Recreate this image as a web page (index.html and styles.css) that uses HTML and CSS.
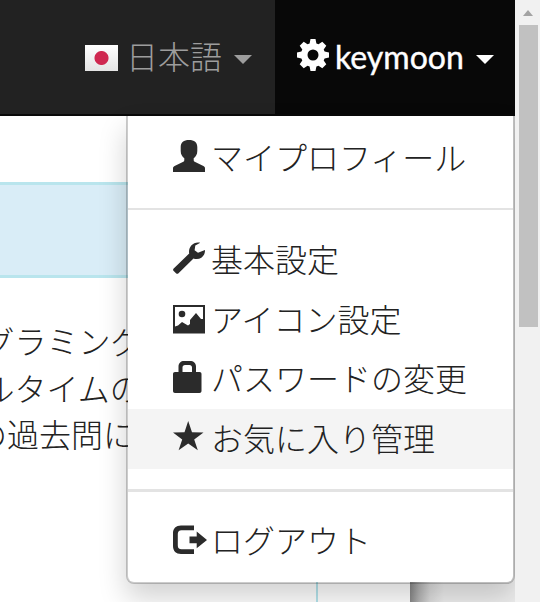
FILE: index.html
```html
<!DOCTYPE html>
<html lang="ja">
<head>
<meta charset="utf-8">
<title>AtCoder</title>
<link rel="stylesheet" href="styles.css">
</head>
<body>
<div class="view">
  <nav class="navbar">
    <div class="lang"><span class="flag"></span><span class="label">日本語</span><span class="caret"></span></div>
    <div class="account">
      <svg class="gear" viewBox="0 0 32 32"><path fill-rule="evenodd" d="M13.500 0h5l.9 4.400 2.100.9L25.300 2.700 29.300 6.700 26.700 10.500l.9 2.100L32 13.500v5l-4.400.9-.9 2.100 2.600 3.800-4 4-3.800-2.600-2.100.9-.9 4.400h-5l-.9-4.400-2.100-.9-3.800 2.600-4-4 2.600-3.800-.9-2.100L0 18.500v-5l4.400-.9.9-2.100L2.700 6.700l4-4 3.800 2.600 2.100-.9zM16 10.500a5.500 5.500 0 1 0 0 11 5.500 5.500 0 0 0 0-11z"/></svg>
      <span class="name">keymoon</span><span class="caret"></span>
    </div>
  </nav>
  <main class="page">
    <div class="content">
      <div class="alert"></div>
      <div class="copy">
        <p class="line">グラミング</p>
        <p class="line">ルタイムの</p>
        <p class="line wide">の過去問に</p>
      </div>
    </div>
    <div class="edge"></div>
  </main>
  <ul class="menu">
    <li class="item"><svg viewBox="0 0 32 32"><path d="M16 0c5.300 0 8.300 2.600 8.300 7v4c0 3.500-1.600 5.700-3.600 7.300v1.900c0 .7.400 1.200 1 1.500l8.700 4.400c1 .5 1.600 1.300 1.600 2.300V32H0v-3.600c0-1 .6-1.800 1.600-2.300l8.700-4.400c.6-.3 1-.8 1-1.500v-1.900C9.300 16.700 7.700 14.500 7.700 11V7c0-4.400 3-7 8.300-7z"/></svg><span>マイプロフィール</span></li>
    <li class="divider"></li>
    <li class="item"><svg viewBox="0 0 32 32"><path d="M27.300.8 22.300 3.500 21.600 8.200l3.400 2.500L32 8c.2 5.200-3.400 9-8.300 9-1.300 0-2.300-.2-3.200-.6L5.500 31.200c-.8.8-1.700.8-2.500 0L.7 29c-.8-.8-.8-1.700 0-2.500L16.200 11.500C15 5.500 20-.8 27.300.8z"/></svg><span>基本設定</span></li>
    <li class="item"><svg viewBox="0 0 32 32"><path fill-rule="evenodd" d="M0 3h32v28.500H0zM2 5v19.500l3-1 4-3.500 6 3.500 2-1.500v-4l6-7 5 6h2V5z"/><circle cx="9" cy="12" r="3.300"/></svg><span>アイコン設定</span></li>
    <li class="item"><svg viewBox="0 0 32 32"><path fill-rule="evenodd" d="M5.500 11V5.500C5.500 2 8 0 11 0h6c3.500 0 6 2 6 5.500V11h3.500c1.400 0 2 .8 2 2v17c0 1.200-.8 2-2 2H2c-1.200 0-2-.8-2-2V13c0-1.200.8-2 2-2zM9.500 11H19V6.500C19 5 18 4 16.500 4H12c-1.500 0-2.500 1-2.500 2.500z"/></svg><span>パスワードの変更</span></li>
    <li class="item active"><svg viewBox="0 0 32 32"><path d="M15.200 0 19 11.300l11.500.2-9.300 6.900 3.600 10.800-9.600-6.600-9.600 6.600 3.600-10.800L0 11.500l11.500-.2z"/></svg><span>お気に入り管理</span></li>
    <li class="divider thick"></li>
    <li class="item"><svg viewBox="0 0 32 32"><path d="M21 2.500H8C3 2.500 0 5.500 0 10v13C0 28 3 31 8 31h13v-4.700H8.500C6 26.300 4.800 25 4.800 22.500V11C4.800 8.500 6 7.200 8.500 7.200H21zM16.500 13.500h7.200v-5L34 17 23.700 25.200v-5h-7.200z"/></svg><span>ログアウト</span></li>
  </ul>
</div>
<aside class="scrollbar"><span class="arrow"></span><span class="thumb"></span></aside>
</body>
</html>
```
FILE: styles.css
```css
* { box-sizing: border-box; }
body {
  margin: 0;
  width: 540px;
  height: 602px;
  overflow: hidden;
  display: flex;
  background: #fff;
  font-family: Lato, "Noto Sans CJK JP", sans-serif;
  font-size: 32px;
  font-weight: 300;
  color: #222;
}
.view { position: relative; width: 515px; height: 602px; overflow: hidden; }
.navbar {
  display: flex;
  justify-content: flex-end;
  height: 116px;
  background: #222;
  border-bottom: 2px solid #090909;
}
.lang { display: flex; align-items: center; width: 190px; color: #9d9d9d; }
.flag {
  width: 33px;
  height: 26px;
  margin: 2px 8px 0 0;
  background: radial-gradient(circle at center, #cf2850 6.500px, transparent 7.500px), linear-gradient(#fff, #e4e4e4);
}
.label, .name { line-height: 48px; }
.name { -webkit-text-stroke: .4px #fff; }
.caret {
  margin: 4px 0 0 12px;
  border: 9px solid transparent;
  border-top-color: currentColor;
  border-bottom: 0;
}
.account {
  display: flex;
  align-items: center;
  width: 240px;
  padding-left: 22px;
  background: #080808;
  color: #fff;
  font-weight: 400;
}
.gear { width: 32px; height: 32px; margin: -4px 6px 0 0; fill: #fff; }
.page { display: flex; height: 486px; }
.content {
  width: 318px;
  padding-top: 66px;
  border-right: 2px solid #b5e4ec;
  flex: none;
}
.alert { height: 96px; background: #d9edf7; border: solid #b9e5ed; border-width: 3px 0; }
.copy { margin-top: 41px; line-height: 46.500px; white-space: nowrap; }
.line { margin: 0 0 0 -17.500px; }
.wide { margin-left: -25px; }
.edge {
  margin-left: 92px;
  flex: 1;
  background: linear-gradient(90deg, #888, #b5b5b5 9px, #dcdcdc 20px, #eee 34px);
}
.menu {
  position: absolute;
  left: 126px;
  top: 116px;
  width: 389px;
  height: 468px;
  margin: 0;
  padding: 12px 0;
  list-style: none;
  background: #fff;
  background-clip: padding-box;
  border: 2px solid rgba(0, 0, 0, .2);
  border-top: 0;
  border-radius: 0 0 8px 8px;
  box-shadow: 0 14px 28px rgba(0, 0, 0, .18);
}
.item {
  display: flex;
  align-items: center;
  gap: 6px;
  height: 59.500px;
  padding: 0 0 4px 45px;
  white-space: nowrap;
}
.item svg { width: 32px; height: 32px; flex: none; fill: #2b2b2b; overflow: visible; }
.active { background: #f4f4f4; }
.divider { height: 2px; margin: 20px 0 21px; background: #e3e3e3; }
.thick { height: 3px; margin: 20px 0; }
.scrollbar { width: 25px; padding: 10px 2px 0 4px; background: #f1f1f1; }
.arrow {
  display: block;
  width: 0;
  margin: 0 4px 9px;
  border: 5.500px solid transparent;
  border-bottom: 6px solid #a3a3a3;
  border-top: 0;
}
.thumb { display: block; height: 302px; background: #c1c1c1; }
```
